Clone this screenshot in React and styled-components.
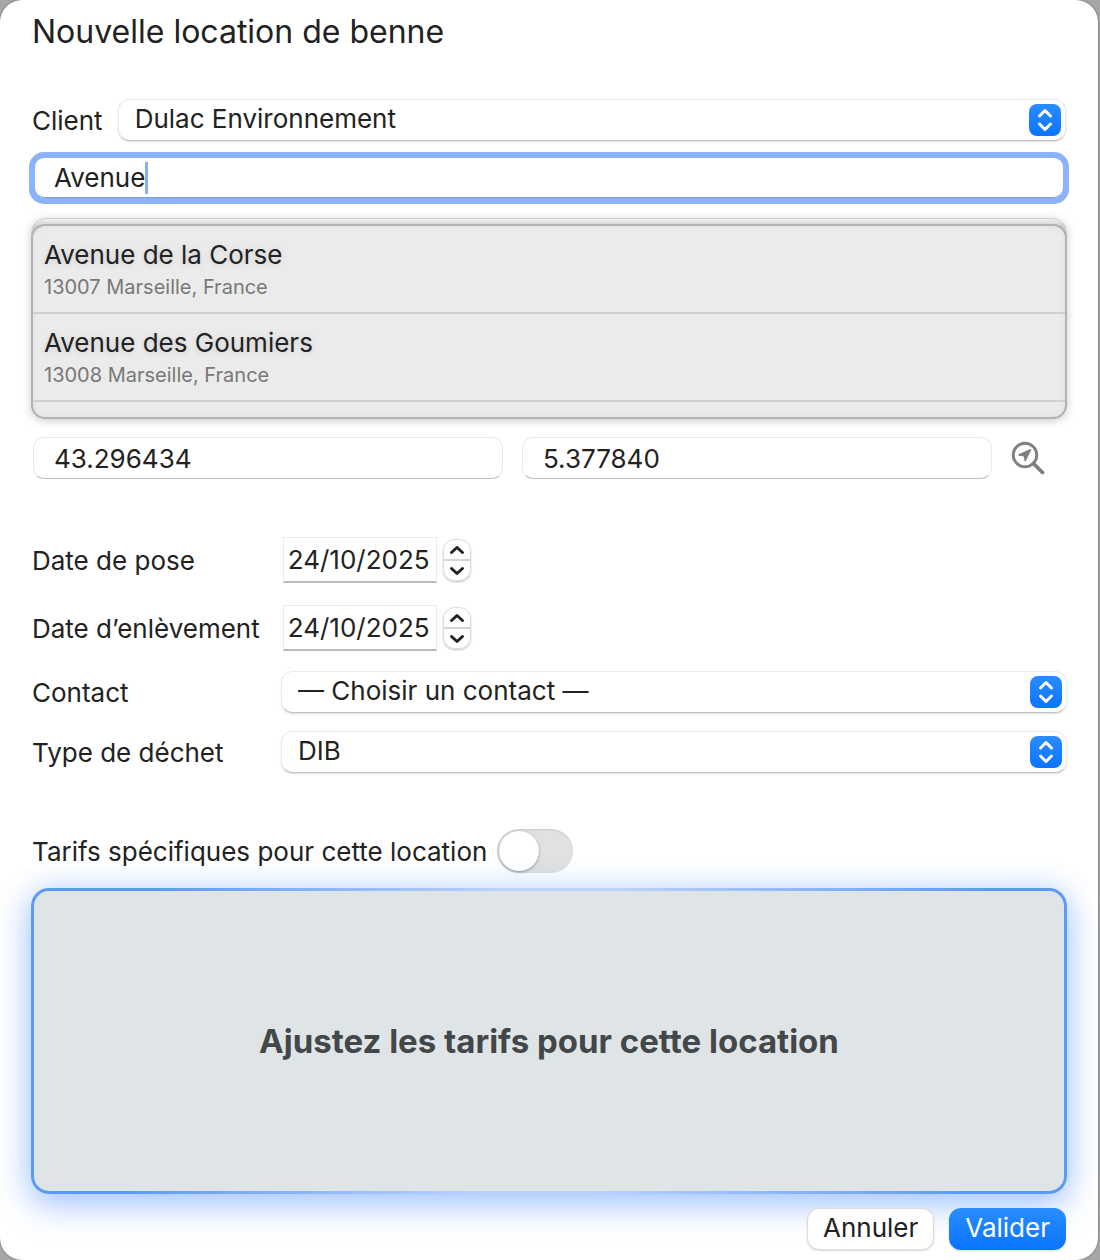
import React, { useState } from "react";
import styled, { createGlobalStyle } from "styled-components";

const GlobalStyle = createGlobalStyle`
  * { box-sizing: border-box; }
  body {
    margin: 0;
    background: #a6a6a6;
    color: #222;
    font: 26px/32px Inter, "Liberation Sans", sans-serif;
  }
  button, input, select { font: inherit; color: inherit; }
`;

const Sheet = styled.form`
  display: flex;
  flex-direction: column;
  min-height: 100vh;
  margin-right: 2px;
  padding: 11px 32px 10px;
  border-radius: 22px;
  background: #fff;
  box-shadow: 0 0 2px rgba(0, 0, 0, 0.5);
`;

const Title = styled.h1`
  margin: 0 0 46px;
  font-size: 32px;
  line-height: 42px;
  font-weight: 400;
`;

const Line = styled.div`
  display: flex;
  align-items: center;
  gap: ${(p) => p.$gap}px;
`;

const Grid = styled.div`
  display: grid;
  grid-template-columns: max-content 1fr;
  column-gap: 23px;
  row-gap: ${(p) => p.$rows}px;
  align-items: center;
`;

const Label = styled.label`
  padding-top: 2px;
  white-space: nowrap;
`;

const edge = `
  border: 1px solid #ebebeb;
  border-bottom-color: #c2c2c2;
  background: #fff;
  outline: none;
`;

const SelectShell = styled.div`
  display: grid;
  flex: 1;
  min-width: 0;
  align-items: center;
  > * { grid-area: 1 / 1; }
`;

const Select = styled.select`
  ${edge}
  appearance: none;
  width: 100%;
  height: 42px;
  padding: 0 48px 2px 16px;
  border-radius: 12px;
  box-shadow: 0 1px 2px rgba(0, 0, 0, 0.14);
`;

const SelectMark = styled.span`
  display: grid;
  place-items: center;
  justify-self: end;
  width: 32px;
  height: 32px;
  margin-right: 5px;
  border-radius: 8px;
  background: linear-gradient(#2a8cff, #0a74ff);
  pointer-events: none;
`;

const SearchField = styled.div`
  display: flex;
  align-items: center;
  height: 40px;
  margin: 17px 3px 0;
  padding-left: 19px;
  border-radius: 9px;
  background: #fff;
  box-shadow: 0 0 0 6px #8bb2fb, inset 0 -1px 0 #7f9dd0;
`;

const SearchInput = styled.input`
  field-sizing: content;
  height: 32px;
  padding: 0;
  border: 0;
  background: none;
  outline: none;
  caret-color: transparent;
`;

const Caret = styled.span`
  width: 3px;
  height: 32px;
  background: #86b1fa;
`;

const ListTray = styled.div`
  margin: 20px -1px 0;
  padding-top: 5px;
  border: 1px solid #cfcfcf;
  border-radius: 14px;
  background: linear-gradient(#f0f0f0, #cccccc 8px);
  box-shadow: 0 2px 10px rgba(0, 0, 0, 0.2);
`;

const Suggestions = styled.ul`
  margin: 0 -1px -1px;
  padding: 0 0 15px;
  list-style: none;
  border: 2px solid #b2b2b2;
  border-radius: 14px;
  background: #ebebeb;
  box-shadow: inset 0 0 6px rgba(0, 0, 0, 0.05);
`;

const Suggestion = styled.button`
  display: flex;
  flex-direction: column;
  width: 100%;
  height: 88px;
  padding: 13px 12px 0 11px;
  border: 0;
  border-bottom: 2px solid #d0d0d0;
  background: none;
  text-align: left;
  text-shadow: 0 1px 6px rgba(0, 0, 0, 0.14);
`;

const Place = styled.span`
  font-size: 20px;
  color: #787878;
  text-shadow: none;
`;

const CoordLine = styled(Line)`
  margin: 18px 21px 0 1px;
`;

const Coord = styled.input`
  ${edge}
  flex: 1;
  min-width: 0;
  height: 42px;
  padding: 0 20px;
  border-radius: 11px;
`;

const IconButton = styled.button`
  display: grid;
  place-items: center;
  padding: 0;
  border: 0;
  background: none;
`;

const Dates = styled(Grid)`
  margin-top: 58px;
`;

const DateInput = styled.input`
  ${edge}
  width: 154px;
  height: 46px;
  padding: 0 4px;
  border-bottom: 2px solid #bcbcbc;
`;

const Stepper = styled.div`
  display: flex;
  flex-direction: column;
  width: 28px;
  height: 42px;
  border: 1px solid #dedede;
  border-radius: 12px;
  box-shadow: 0 1px 2px rgba(0, 0, 0, 0.25);
`;

const Step = styled.button`
  display: grid;
  flex: 1;
  place-items: center;
  padding: 0;
  border: 0;
  background: none;
  & + & { border-top: 2px solid #d4d4d4; }
`;

const Choices = styled(Grid)`
  margin: 20px -1px 0 0;
  grid-template-columns: 226px 1fr;
`;

const RateLine = styled(Line)`
  margin-top: 56px;
`;

const Switch = styled.input`
  appearance: none;
  display: flex;
  width: 76px;
  height: 44px;
  margin: 0;
  padding: 2px;
  border-radius: 22px;
  background: #e1e1e1;
  box-shadow: inset 0 1px 2px rgba(0, 0, 0, 0.1);
  &::before {
    content: "";
    width: 40px;
    height: 40px;
    border-radius: 50%;
    background: #fff;
    box-shadow: 0 1px 3px rgba(0, 0, 0, 0.35);
  }
  &:checked { justify-content: flex-end; background: #0a7aff; }
`;

const Panel = styled.section`
  display: grid;
  flex: 1;
  place-items: center;
  min-height: 306px;
  margin: 15px -1px 0;
  border: 3px solid transparent;
  border-radius: 18px;
  background:
    linear-gradient(#dfe4e7, #dfe5e7) padding-box,
    linear-gradient(95deg, #5c9bf5 12%, #bdd3fa 45%, #bdd3fa 55%, #5c9bf5 90%) border-box;
  box-shadow: 0 0 30px rgba(50, 125, 255, 0.2), 0 12px 34px rgba(50, 125, 255, 0.36);
`;

const PanelText = styled.h2`
  margin: 0;
  font-size: 33px;
  line-height: 42px;
  font-weight: 700;
  color: #434749;
`;

const Actions = styled.div`
  display: flex;
  justify-content: flex-end;
  gap: 15px;
  margin-top: 14px;
`;

const Button = styled.button`
  height: 42px;
  padding: 0 15px 2px;
  border: 1px solid ${(p) => (p.$primary ? "transparent" : "#dcdcdc")};
  border-radius: 12px;
  color: ${(p) => (p.$primary ? "#fff" : "#222")};
  background: ${(p) => (p.$primary ? "linear-gradient(#2a8cff, #0a74ff) border-box" : "#fff")};
  box-shadow: 0 1px 2px rgba(0, 0, 0, 0.15);
`;

const DoubleChevron = () => (
  <svg width="16" height="24" viewBox="0 0 16 24" fill="none" stroke="#fff" strokeWidth="3" strokeLinecap="round" strokeLinejoin="round">
    <path d="M2.500 8 8 2.500 13.500 8M2.500 16 8 21.500 13.500 16" />
  </svg>
);

const Chevron = ({ up }) => (
  <svg width="16" height="10" viewBox="0 0 16 10" fill="none" stroke="#222" strokeWidth="3" strokeLinecap="round" strokeLinejoin="round">
    <path d={up ? "M2.500 7.500 8 2.500 13.500 7.500" : "M2.500 2.500 8 7.500 13.500 2.500"} />
  </svg>
);

const LocateIcon = () => (
  <svg width="34" height="34" viewBox="0 0 34 34" fill="none" stroke="#808080">
    <circle cx="14" cy="14" r="11.800" strokeWidth="2.900" />
    <path d="M22.500 22.500 31.500 31.500" strokeWidth="3.800" strokeLinecap="round" />
    <path d="M19.500 8.700 14.200 19.800 13.400 14.700 8 14Z" fill="#808080" strokeWidth="1.400" strokeLinejoin="round" />
  </svg>
);

function Popup({ id, children }) {
  return (
    <SelectShell>
      <Select id={id}>{children}</Select>
      <SelectMark><DoubleChevron /></SelectMark>
    </SelectShell>
  );
}

function DateRow({ id, label }) {
  return (
    <>
      <Label htmlFor={id}>{label}</Label>
      <Line $gap={6}>
        <DateInput id={id} defaultValue="24/10/2025" />
        <Stepper>
          <Step type="button" aria-label="Jour suivant"><Chevron up /></Step>
          <Step type="button" aria-label="Jour précédent"><Chevron /></Step>
        </Stepper>
      </Line>
    </>
  );
}

const places = [
  { street: "Avenue de la Corse", city: "13007 Marseille, France" },
  { street: "Avenue des Goumiers", city: "13008 Marseille, France" },
];

export default function App() {
  const [query, setQuery] = useState("Avenue");
  return (
    <>
      <GlobalStyle />
      <Sheet onSubmit={(e) => e.preventDefault()}>
        <Title>Nouvelle location de benne</Title>
        <Line $gap={15}>
          <Label htmlFor="client">Client</Label>
          <Popup id="client"><option>Dulac Environnement</option></Popup>
        </Line>
        <SearchField>
          <SearchInput aria-label="Adresse" value={query} onChange={(e) => setQuery(e.target.value)} />
          <Caret />
        </SearchField>
        <ListTray>
          <Suggestions>
            {places.map((p) => (
              <li key={p.city}>
                <Suggestion type="button" onClick={() => setQuery(p.street)}>
                  {p.street}
                  <Place>{p.city}</Place>
                </Suggestion>
              </li>
            ))}
          </Suggestions>
        </ListTray>
        <CoordLine $gap={19}>
          <Coord aria-label="Latitude" defaultValue="43.296434" />
          <Coord aria-label="Longitude" defaultValue="5.377840" />
          <IconButton type="button" aria-label="Localiser"><LocateIcon /></IconButton>
        </CoordLine>
        <Dates $rows={22}>
          <DateRow id="pose" label="Date de pose" />
          <DateRow id="enlevement" label="Date d’enlèvement" />
        </Dates>
        <Choices $rows={18}>
          <Label htmlFor="contact">Contact</Label>
          <Popup id="contact"><option>— Choisir un contact —</option></Popup>
          <Label htmlFor="dechet">Type de déchet</Label>
          <Popup id="dechet"><option>DIB</option></Popup>
        </Choices>
        <RateLine $gap={10}>
          <Label htmlFor="tarifs">Tarifs spécifiques pour cette location</Label>
          <Switch id="tarifs" type="checkbox" role="switch" />
        </RateLine>
        <Panel><PanelText>Ajustez les tarifs pour cette location</PanelText></Panel>
        <Actions>
          <Button type="button">Annuler</Button>
          <Button type="submit" $primary>Valider</Button>
        </Actions>
      </Sheet>
    </>
  );
}
